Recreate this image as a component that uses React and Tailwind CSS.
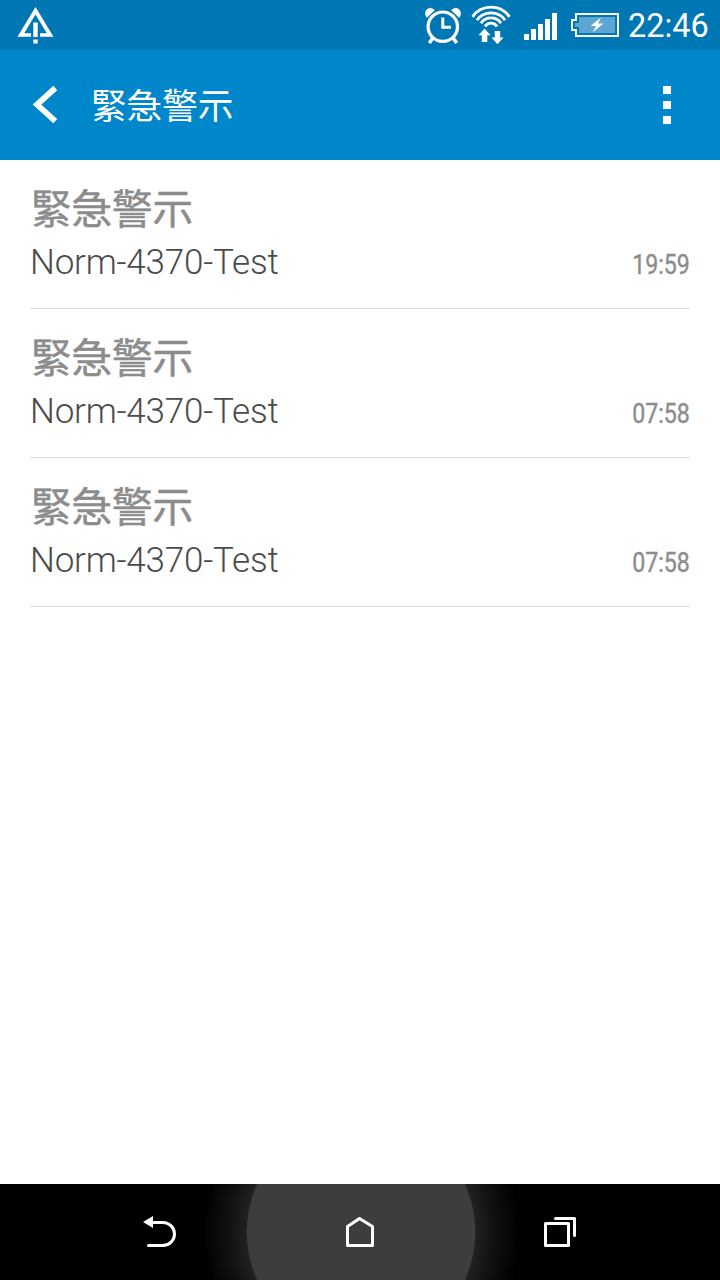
const alerts = [
  { id: 1, title: "緊急警示", message: "Norm-4370-Test", time: "19:59" },
  { id: 2, title: "緊急警示", message: "Norm-4370-Test", time: "07:58" },
  { id: 3, title: "緊急警示", message: "Norm-4370-Test", time: "07:58" },
];

function AlertIcon() {
  return (
    <svg width="40" height="50" viewBox="0 0 40 50" fill="#fff">
      <path d="M20.5 7L2.5 36.8H16V33.2H9.2L20.5 14.5L31.8 33.2H25V36.8H38.5Z" />
      <path d="M18.3 22.5h4.4v14.5h-4.4zM18.3 39.5h4.4v4h-4.4z" />
    </svg>
  );
}

function AlarmIcon() {
  return (
    <svg width="38" height="50" viewBox="424 0 38 50" fill="none" stroke="#fff">
      <circle cx="442.8" cy="26.7" r="14.7" strokeWidth="3.2" />
      <path d="M442.8 17.5V27.3H451" strokeWidth="3" />
      <path d="M433.5 37L429.3 43M452.5 37L456.7 43" strokeWidth="3.6" />
      <path
        d="M426.8 17.5C422.5 11.5 429 5 434.5 10.2ZM459.2 17.5C463.5 11.5 457 5 451.5 10.2Z"
        fill="#fff"
        strokeWidth="0.5"
      />
    </svg>
  );
}

function WifiIcon() {
  return (
    <svg width="40" height="50" viewBox="471 0 40 50" fill="none" stroke="#fff">
      <g strokeWidth="2.9">
        <path d="M472.5 16.8A22.5 22.5 0 0 1 509.5 16.8" />
        <path d="M476.9 20.2A17.3 17.3 0 0 1 505.1 20.2" />
        <path d="M481 23.2A12.1 12.1 0 0 1 501 23.2" />
        <path d="M485 26.5A7 7 0 0 1 497 26.5" />
      </g>
      <path
        d="M484.5 28.5L490.5 35.3H487.3V42H481.8V35.3H478.5ZM494.8 31H500.2V37.5H503.5L497.5 44.2L491.5 37.5H494.8Z"
        fill="#fff"
        stroke="none"
      />
    </svg>
  );
}

function SignalIcon() {
  return (
    <svg width="34" height="50" viewBox="524 0 34 50" fill="#fff">
      <path d="M524 34h5v6h-5zM531 29h5v11h-5zM538 24h5v16h-5zM545 19h5v21h-5zM552 13h5v27h-5z" />
    </svg>
  );
}

function BatteryIcon() {
  return (
    <svg width="48" height="50" viewBox="571 0 48 50">
      <path
        d="M576 14H618V36H576V30H572V20H576Z"
        fill="none"
        stroke="#fff"
        strokeWidth="2"
      />
      <path d="M579 17H615V33H579V27H575V23H579Z" fill="#5ba6d2" />
      <path d="M601 17.5L590.5 26H596L592.5 32.5L603.5 23.5H598Z" fill="#fff" />
    </svg>
  );
}

function StatusBar() {
  return (
    <div className="flex h-[50px] items-center bg-[#0077b5] pl-[15px] text-white">
      <AlertIcon />
      <div className="ml-auto flex h-[50px] items-center pr-3">
        <AlarmIcon />
        <span className="w-[9px]" />
        <WifiIcon />
        <span className="w-[13px]" />
        <SignalIcon />
        <span className="w-[13px]" />
        <BatteryIcon />
        <span className="ml-[9px] w-20 pt-px text-[32.4px] leading-[50px]">22:46</span>
      </div>
    </div>
  );
}

function Header() {
  return (
    <header className="flex h-[110px] items-center bg-[#0086cb] pl-[30px] pr-[49px] text-white">
      <svg width="30" height="40" viewBox="30 85 30 40" fill="none" stroke="#fff" strokeWidth="5.8">
        <path d="M55.3 88L37 104.6L55.3 121.2" />
      </svg>
      <h1 className="ml-[31px] pt-[3px] text-[35.6px] leading-[52px]">緊急警示</h1>
      <div className="ml-auto flex flex-col gap-[7px]">
        <span className="size-2 bg-white" />
        <span className="size-2 bg-white" />
        <span className="size-2 bg-white" />
      </div>
    </header>
  );
}

function AlertRow({ alert }) {
  return (
    <li className="mx-[30px] h-[149px] border-b border-[#dcdcdc] pt-6">
      <div className="h-[51px] pl-px text-[40.5px] leading-[53px] text-[#8c8c8c] [-webkit-text-stroke:0.5px_#8c8c8c]">
        {alert.title}
      </div>
      <div className="flex h-[54px] items-center justify-between">
        <span className="pt-px text-[35px] leading-[54px] font-light tracking-[-0.2px] text-[#4b4b4b]">
          {alert.message}
        </span>
        <span className="origin-right scale-x-[0.85] pt-[6px] text-[27.2px] leading-[54px] text-[#8c8c8c] [-webkit-text-stroke:0.4px_#8c8c8c]">
          {alert.time}
        </span>
      </div>
    </li>
  );
}

function NavBar() {
  return (
    <nav className="h-24 bg-black">
      <svg width="720" height="96" viewBox="0 1184 720 96" fill="none" stroke="#fff" strokeWidth="3">
        <defs>
          <radialGradient id="glow" gradientUnits="userSpaceOnUse" cx="361" cy="1232" r="156">
            <stop offset="0.73" stopColor="#222" />
            <stop offset="0.85" stopColor="#111" />
            <stop offset="1" stopColor="#020202" />
          </radialGradient>
        </defs>
        <rect x="206" y="1184" width="309" height="96" fill="url(#glow)" stroke="none" />
        <circle cx="361" cy="1232" r="114.3" fill="#3d3d3d" stroke="none" />
        <path d="M151 1222.5H163A11.5 11.5 0 0 1 163 1245.5H148.5" strokeLinecap="round" />
        <path d="M143 1222L153 1216V1228Z" fill="#fff" stroke="none" />
        <path d="M347.5 1226.5L359.5 1218.5L372.5 1226.5V1245.5H347.5Z" strokeLinejoin="round" />
        <path d="M545.5 1223.5H568.5V1245.5H545.5Z" strokeLinejoin="round" />
        <path d="M555.5 1218.5H574.5V1235.5" strokeLinecap="round" strokeLinejoin="round" />
      </svg>
    </nav>
  );
}

export default function App() {
  return (
    <div className="flex h-[1280px] w-[720px] flex-col bg-white font-['Roboto','Noto_Sans_CJK_TC',sans-serif]">
      <StatusBar />
      <Header />
      <ul className="flex-1">
        {alerts.map((alert) => (
          <AlertRow key={alert.id} alert={alert} />
        ))}
      </ul>
      <NavBar />
    </div>
  );
}
